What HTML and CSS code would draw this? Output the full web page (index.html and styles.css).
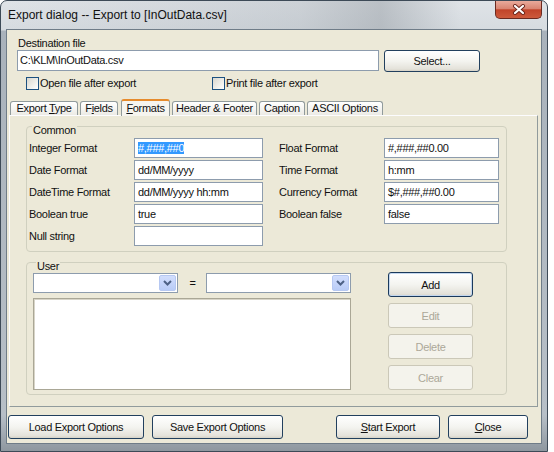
FILE: index.html
```html
<!DOCTYPE html>
<html lang="en">
<head>
  <meta charset="UTF-8"/>
  <title>Export dialog</title>
  <link rel="stylesheet" href="styles.css">
</head>
<body>
  <div class="window">
    <div class="titlebar">
      <span class="title">Export dialog -- Export to [InOutData.csv]</span>
      <button type="button" class="close-x">
        <svg width="14" height="11" viewBox="0 0 14 11">
          <path d="M3 2 L11 9 M11 2 L3 9" stroke="#6a241a" stroke-width="4" stroke-linecap="round"/>
          <path d="M3 2 L11 9 M11 2 L3 9" stroke="#fff" stroke-width="2.2" stroke-linecap="round"/>
        </svg>
      </button>
    </div>

    <div class="client">
      <div class="dest">
        <label class="dest-label">Destination file</label>
        <div class="dest-row">
          <div class="edit dest-input">C:\KLM\InOutData.csv</div>
          <button type="button" class="btn select-btn">Select...</button>
        </div>
        <div class="checks">
          <label class="check first"><span class="box"></span>Open file after export</label>
          <label class="check"><span class="box"></span>Print file after export</label>
        </div>
      </div>

      <div class="tabs">
        <div class="tab tab-type">Export <u>T</u>ype</div>
        <div class="tab tab-fields">F<u>i</u>elds</div>
        <div class="tab tab-formats active"><u>F</u>ormats</div>
        <div class="tab tab-header">Header &amp; Footer</div>
        <div class="tab tab-caption">Caption</div>
        <div class="tab tab-ascii">ASCII Options</div>
      </div>

      <div class="page">
        <fieldset class="group common">
          <legend>Common</legend>
          <div class="format-grid">
            <span>Integer Format</span>
            <div class="edit"><span class="sel">#,###,##0</span></div>
            <span class="lbl2">Float Format</span>
            <div class="edit">#,###,##0.00</div>

            <span>Date Format</span>
            <div class="edit">dd/MM/yyyy</div>
            <span class="lbl2">Time Format</span>
            <div class="edit">h:mm</div>

            <span>DateTime Format</span>
            <div class="edit">dd/MM/yyyy hh:mm</div>
            <span class="lbl2">Currency Format</span>
            <div class="edit">$#,###,##0.00</div>

            <span>Boolean true</span>
            <div class="edit">true</div>
            <span class="lbl2">Boolean false</span>
            <div class="edit">false</div>

            <span>Null string</span>
            <div class="edit"></div>
          </div>
        </fieldset>

        <fieldset class="group user">
          <legend>User</legend>
          <div class="user-body">
            <div class="user-left">
              <div class="combo-row">
                <div class="combo">
                  <span class="drop">
                    <svg width="9" height="6" viewBox="0 0 9 6"><path d="M1 1 L4.5 4.5 L8 1" fill="none" stroke="#4d6185" stroke-width="2"/></svg>
                  </span>
                </div>
                <span class="eq">=</span>
                <div class="combo">
                  <span class="drop">
                    <svg width="9" height="6" viewBox="0 0 9 6"><path d="M1 1 L4.5 4.5 L8 1" fill="none" stroke="#4d6185" stroke-width="2"/></svg>
                  </span>
                </div>
              </div>
              <div class="listbox"></div>
            </div>
            <div class="user-buttons">
              <button type="button" class="btn default">Add</button>
              <button type="button" class="btn" disabled>Edit</button>
              <button type="button" class="btn" disabled>Delete</button>
              <button type="button" class="btn" disabled>Clear</button>
            </div>
          </div>
        </fieldset>
      </div>

      <div class="actions">
        <button type="button" class="btn load-btn">Load Export Options</button>
        <button type="button" class="btn save-btn">Save Export Options</button>
        <button type="button" class="btn start-btn"><u>S</u>tart Export</button>
        <button type="button" class="btn close-btn"><u>C</u>lose</button>
      </div>
    </div>
  </div>
</body>
</html>
```

FILE: styles.css
```css
* {
  box-sizing: border-box;
}

body {
  margin: 0;
  background: #fff;
  font-family: "Liberation Sans", Arial, sans-serif;
  font-size: 11px;
  letter-spacing: -0.3px;
  color: #111;
}

/* window frame */
.window {
  width: 548px;
  height: 452px;
  padding: 0 6px 8px 6px;
  border: 1px solid #3d4a57;
  border-radius: 7px 7px 0 0;
  background: linear-gradient(to bottom, #dfe3e7 0, #d6dbe0 29px, #a9b2bb 30px, #b7bfc7 92%, #8e979f 100%);
  display: flex;
  flex-direction: column;
}

.titlebar {
  height: 29px;
  display: flex;
  align-items: flex-start;
  background: linear-gradient(to right, transparent 0, rgba(150, 158, 166, 0.25) 55%, rgba(120, 128, 136, 0.35) 70%, transparent 85%);
}

.title {
  line-height: 29px;
  padding-left: 1px;
  font-size: 12px;
  letter-spacing: 0;
  color: #111;
}

.close-x {
  margin-left: auto;
  margin-right: -1px;
  width: 47px;
  height: 18px;
  padding: 0;
  border: 1px solid #6b2a20;
  border-top: none;
  border-radius: 0 0 5px 5px;
  background: linear-gradient(to bottom, #e9aa9b 0, #d98572 45%, #c1442a 52%, #cd5a3c 100%);
  display: flex;
  align-items: center;
  justify-content: center;
}

/* client area */
.client {
  flex: 1;
  background: #ece9d8;
  box-shadow: 0 0 0 1px #6f7c88;
  padding: 7px 0 4px 0;
  display: flex;
  flex-direction: column;
}

.dest {
  padding-left: 10px;
}

.dest-label {
  display: block;
  line-height: 13px;
  padding-left: 1px;
}

.dest-row {
  display: flex;
  align-items: flex-start;
}

.edit {
  height: 20px;
  border: 1px solid #8d9cad;
  background: #fff;
  padding: 0 3px;
  line-height: 18px;
  white-space: nowrap;
  overflow: hidden;
}

.dest-input {
  width: 362px;
  height: 21px;
  line-height: 19px;
  padding-left: 2px;
}

.sel {
  background: #3399ff;
  color: #fff;
}

.checks {
  display: flex;
  margin-top: 5px;
  padding-left: 9px;
}

.check {
  display: flex;
  align-items: center;
  height: 13px;
  line-height: 13px;
}

.check.first {
  width: 186px;
}

.box {
  width: 13px;
  height: 13px;
  margin-right: 1px;
  border: 1px solid #1c5180;
  background: linear-gradient(135deg, #d8d7cf 0, #f4f4f0 70%, #fff 100%);
}

/* buttons */
.btn {
  font: inherit;
  letter-spacing: inherit;
  color: #111;
  padding: 0;
  border: 1px solid #22405e;
  border-radius: 3px;
  background: linear-gradient(to bottom, #fff 0, #f4f4f0 50%, #e4e2da 90%, #d6d2c6 100%);
}

.btn.default {
  border-color: #1b3a5c;
  box-shadow: inset 0 0 0 1px #c4d7ee;
}

.btn:disabled {
  border-color: #cbc8b8;
  background: #f4f3ec;
  color: #aca899;
}

.select-btn {
  width: 96px;
  height: 22px;
  margin-left: 5px;
}

/* tabs */
.tabs {
  display: flex;
  align-items: flex-end;
  height: 16px;
  margin-top: 9px;
  padding-left: 3px;
}

.tab {
  height: 14px;
  line-height: 13px;
  text-align: center;
  margin-right: 2px;
  border: 1px solid #919b9c;
  border-bottom: none;
  border-radius: 3px 3px 0 0;
  background: linear-gradient(to bottom, #fff, #ecebe5);
}

.tab.active {
  position: relative;
  z-index: 1;
  height: 17px;
  margin-bottom: -1px;
  line-height: 14px;
  border-top: 2px solid #e68b2c;
  background: #f6f5ef;
}

.tab-type { width: 68px; }
.tab-fields { width: 38px; margin-right: 3px; }
.tab-formats { width: 49px; }
.tab-header { width: 85px; }
.tab-caption { width: 46px; }
.tab-ascii { width: 76px; }

.page {
  flex: none;
  height: 292px;
  margin: 0 3px 0 2px;
  padding-left: 16px;
  border: 1px solid #919b9c;
  border-top-color: #fcfcfe;
  border-left-color: #fcfcfe;
  background: #ece9d8;
}

/* group boxes */
.group {
  width: 481px;
  margin: 0;
  border: 1px solid #d0d0bf;
  border-radius: 4px;
  min-inline-size: 0;
}

.group legend {
  margin-left: 3px;
  padding: 9px 1px 0;
  line-height: 11px;
}

.common {
  padding: 2px 0 5px 2px;
}

.format-grid {
  display: grid;
  grid-template-columns: 105px 129px 121px 115px;
  grid-auto-rows: 20px;
  row-gap: 2px;
  align-items: center;
}

.lbl2 {
  padding-left: 16px;
}

.user {
  padding: 0 0 4px 6px;
}

.user-body {
  display: flex;
}

.user-left {
  width: 318px;
  padding-top: 1px;
}

.combo-row {
  display: flex;
  align-items: center;
  height: 20px;
}

.combo {
  width: 145px;
  height: 20px;
  padding: 1px;
  border: 1px solid #8d9cad;
  background: #fff;
  display: flex;
  justify-content: flex-end;
}

.drop {
  width: 17px;
  height: 16px;
  border: 1px solid #b6c8f2;
  border-radius: 2px;
  background: linear-gradient(to bottom, #d2defd, #b9ccf7);
  display: flex;
  align-items: center;
  justify-content: center;
}

.eq {
  width: 28px;
  text-align: center;
  padding-left: 1px;
}

.listbox {
  height: 92px;
  margin-top: 5px;
  border: 1px solid #aaa796;
  box-shadow: inset 1px 1px 0 #d8d5c8;
  background: #fff;
}

.user-buttons {
  width: 85px;
  margin-left: 37px;
  display: flex;
  flex-direction: column;
  gap: 6px;
}

.user-buttons .btn {
  height: 25px;
}

/* bottom row */
.actions {
  display: flex;
  margin-top: 8px;
  padding: 0 13px 0 1px;
}

.actions .btn {
  height: 24px;
}

.load-btn {
  width: 136px;
}

.save-btn {
  width: 131px;
  margin-left: 8px;
}

.start-btn {
  width: 104px;
  margin-left: auto;
}

.close-btn {
  width: 80px;
  margin-left: 8px;
}
```
